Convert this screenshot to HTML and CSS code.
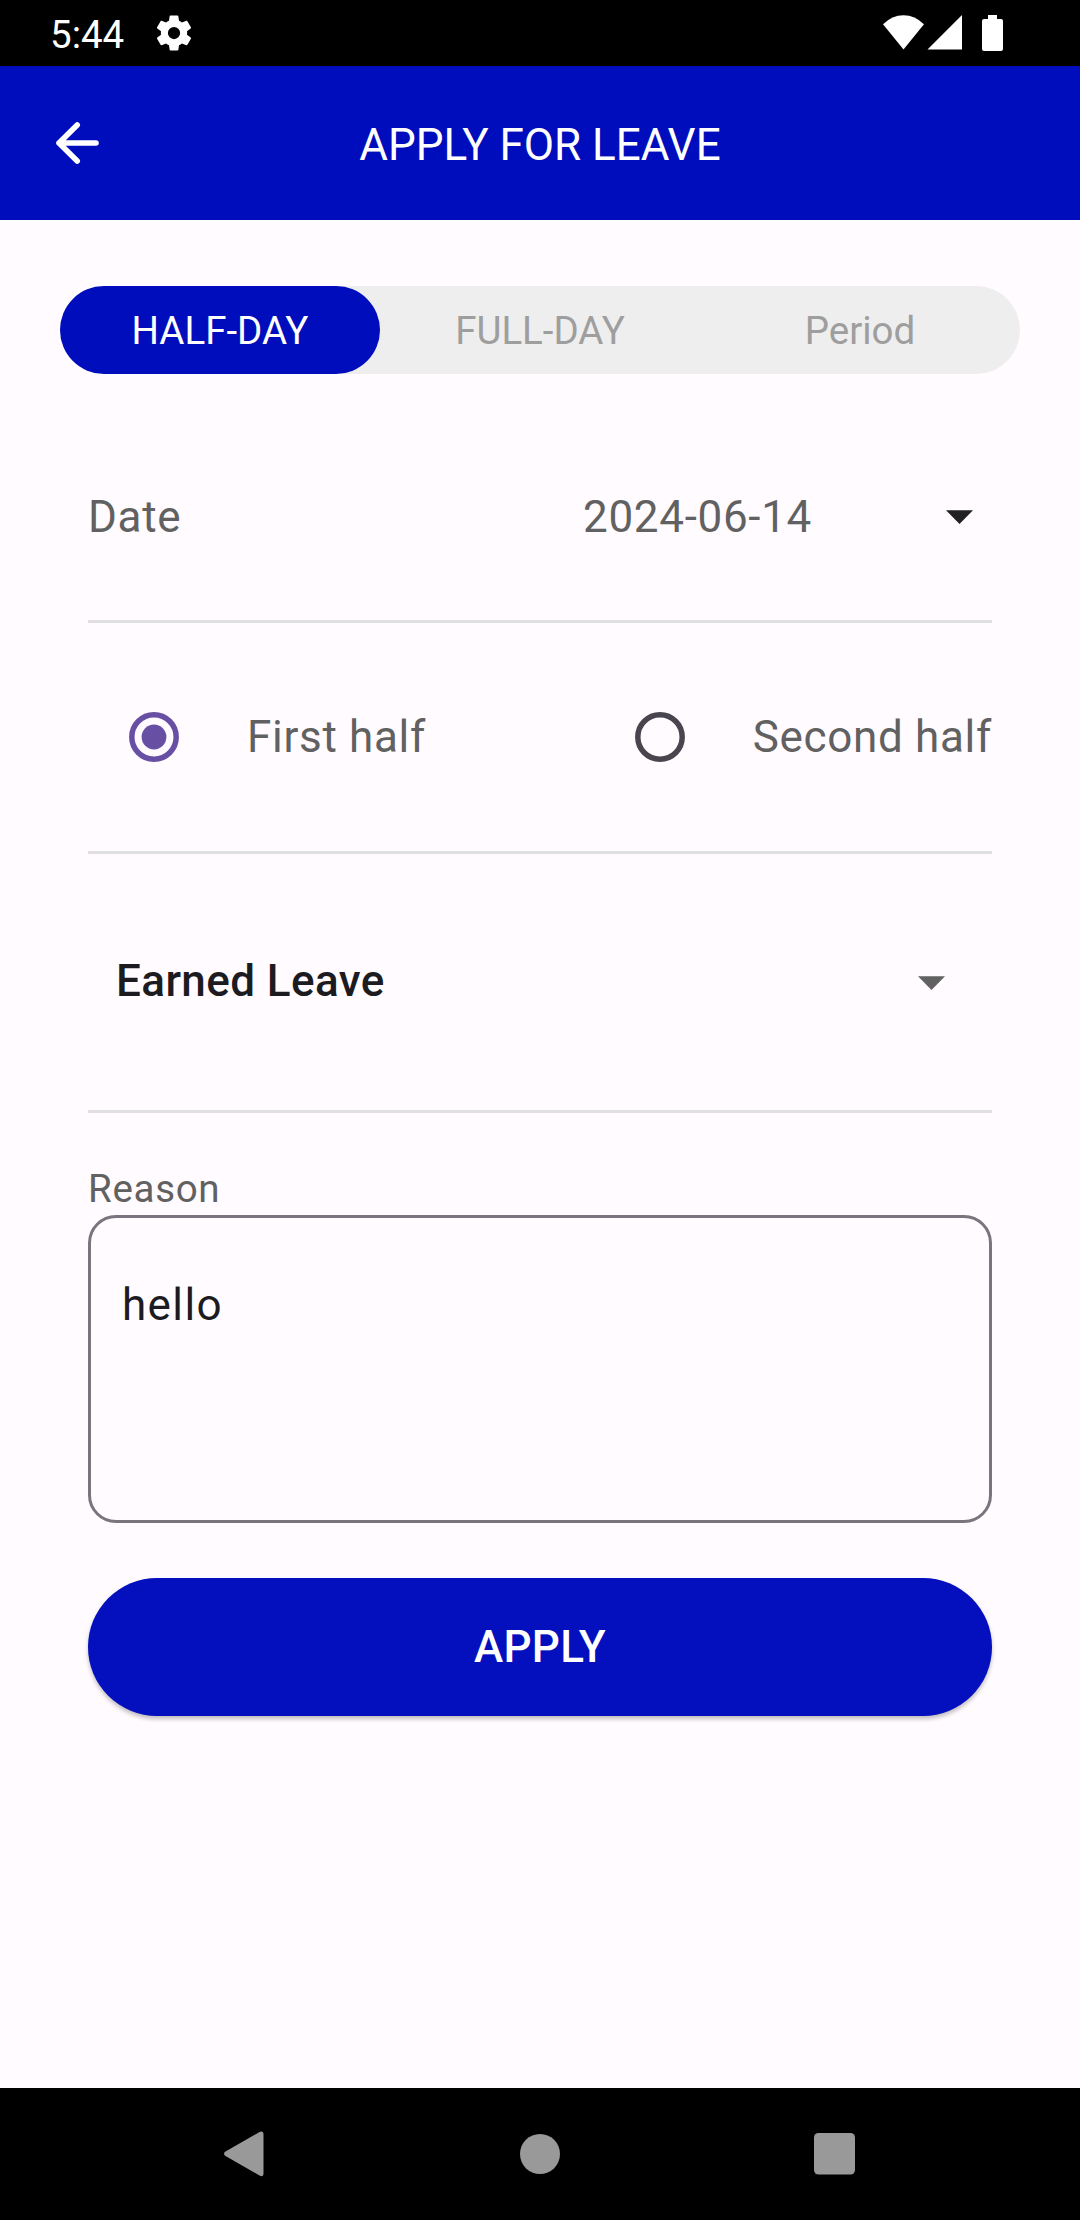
FILE: index.html
```html
<!DOCTYPE html>
<html lang="en">
<head>
<meta charset="utf-8">
<title>Apply for leave</title>
<link rel="stylesheet" href="styles.css">
</head>
<body>
<div class="screen">
  <div class="status">
    <span class="clock">5:44</span>
    <svg class="gear" width="42" height="42" viewBox="0 0 24 24"><path fill="#fff" d="M19.43 12.98c.04-.32.07-.64.07-.98s-.03-.66-.07-.98l2.11-1.65c.19-.15.24-.42.12-.64l-2-3.46c-.12-.22-.39-.3-.61-.22l-2.49 1c-.52-.4-1.08-.73-1.69-.98l-.38-2.65C14.46 2.18 14.25 2 14 2h-4c-.25 0-.46.18-.49.42l-.38 2.65c-.61.25-1.17.59-1.69.98l-2.49-1c-.23-.09-.49 0-.61.22l-2 3.46c-.13.22-.07.49.12.64l2.11 1.65c-.04.32-.07.65-.07.98s.03.66.07.98l-2.11 1.65c-.19.15-.24.42-.12.64l2 3.46c.12.22.39.3.61.22l2.49-1c.52.4 1.08.73 1.69.98l.38 2.65c.03.24.24.42.49.42h4c.25 0 .46-.18.49-.42l.38-2.65c.61-.25 1.17-.59 1.69-.98l2.49 1c.23.09.49 0 .61-.22l2-3.46c.12-.22.07-.49-.12-.64l-2.11-1.65zM12 15.5a3.5 3.5 0 1 1 0-7 3.5 3.5 0 0 1 0 7z"/></svg>
    <svg class="signals" width="122" height="38" viewBox="882 14 122 38" fill="#fff"><path d="M883 24.3Q892 15.2 903.5 15.2T924 24.3L903.500 49.500Z"/><path d="M927.500 49.500L962 15V49.500Z"/><path d="M988 15h9v4h4q2 0 2 2v28q0 2-2 2h-17q-2 0-2-2V21q0-2 2-2h4z"/></svg>
  </div>
  <header class="appbar">
    <svg class="back" width="44" height="44" viewBox="56 121 44 44" fill="none" stroke="#fff" stroke-width="5.600" stroke-linecap="round" stroke-linejoin="round"><path d="M96 143H59M77.200 125L59 143l18.200 18"/></svg>
    <h1 class="title">APPLY FOR LEAVE</h1>
  </header>
  <main class="content">
    <nav class="tabs">
      <div class="tab active">HALF-DAY</div>
      <div class="tab">FULL-DAY</div>
      <div class="tab">Period</div>
    </nav>
    <form class="form">
      <div class="row date">
        <span>Date</span>
        <span class="value">2024-06-14</span>
        <svg class="caret" width="27" height="14" viewBox="0 0 27 14"><path fill="#212121" d="M0 .3h27L13.500 14z"/></svg>
      </div>
      <div class="row halves">
        <svg class="radio" width="50" height="50" viewBox="0 0 50 50"><circle cx="25" cy="25" r="22.200" fill="none" stroke="#6750a4" stroke-width="5.500"/><circle cx="25" cy="25" r="12.400" fill="#6750a4"/></svg>
        <span>First half</span>
        <svg class="radio second" width="50" height="50" viewBox="0 0 50 50"><circle cx="25" cy="25" r="22.200" fill="none" stroke="#49454f" stroke-width="5.500"/></svg>
        <span>Second half</span>
      </div>
      <div class="row leave">
        <span class="kind">Earned Leave</span>
        <svg class="caret" width="27" height="14" viewBox="0 0 27 14"><path fill="#616161" d="M0 .3h27L13.500 14z"/></svg>
      </div>
      <div class="label">Reason</div>
      <div class="reason">hello</div>
      <div class="apply">APPLY</div>
    </form>
  </main>
  <footer class="navbar">
    <svg width="42" height="46" viewBox="0 0 42 46"><path fill="#999" d="M1.500 20.500L35.500 1Q39.500-.5 39.500 3.500V42.500Q39.500 46.500 35.500 44.500L1.500 25Q-1.500 22.700 1.500 20.500Z"/></svg>
    <svg width="40" height="40" viewBox="0 0 40 40"><circle cx="20" cy="20" r="20" fill="#999"/></svg>
    <svg width="41" height="42" viewBox="0 0 41 42"><rect width="41" height="41.500" rx="4.500" fill="#999"/></svg>
  </footer>
</div>
</body>
</html>
```
FILE: styles.css
```css
* { box-sizing: border-box; }
body { margin: 0; background: #fffbff; }
svg { display: block; flex: none; }
.screen {
  width: 1080px;
  height: 2220px;
  display: flex;
  flex-direction: column;
  font-family: Roboto, "Liberation Sans", sans-serif;
  font-size: 44px;
  line-height: 52px;
  letter-spacing: .6875px;
  color: #616161;
  white-space: nowrap;
}
.status {
  height: 66px;
  background: #000;
  color: #fff;
  display: flex;
  align-items: center;
  padding: 0 76px 0 50px;
}
.clock { width: 103px; padding-top: 4px; font-size: 38.5px; letter-spacing: 0; }
.signals { margin-left: auto; }
.appbar {
  height: 154px;
  background: #000dbd;
  color: #fff;
  display: grid;
  grid-template-columns: 44px 1fr 44px;
  align-items: center;
  padding: 0 56px;
}
.title { margin: 0; padding-top: 4px; font-size: 44px; font-weight: 400; letter-spacing: 0; text-align: center; }
.content { flex: 1; padding: 66px 60px 0; }
.tabs {
  height: 88px;
  display: grid;
  grid-template-columns: repeat(3, 1fr);
  border-radius: 44px;
  background: #eee;
  color: #9e9e9e;
  font-size: 38.5px;
  letter-spacing: 0;
}
.tab { height: 88px; padding-top: 1px; border-radius: 44px; line-height: 87px; text-align: center; }
.active { background: #000dbd; color: #fff; }
.form { padding: 0 28px; }
.row { display: flex; align-items: center; border-bottom: 3px solid #e0e0e0; }
.date { height: 249px; padding: 39px 19px 0 0; }
.value { margin-left: auto; margin-right: 134px; }
.halves { height: 231px; padding-left: 41px; }
.halves span { margin-left: 68px; }
.second { margin-left: auto; }
.leave { height: 259px; padding: 0 47px 0 28px; }
.kind { color: #1c1b1f; font-weight: 500; letter-spacing: .4125px; margin-top: -2px; }
.leave .caret { margin-left: auto; margin-top: 2px; }
.label { padding-top: 53px; height: 102px; font-size: 38.5px; line-height: 46px; }
.reason {
  height: 308px;
  padding: 61px 31px;
  border: 3px solid #79747e;
  border-radius: 28px;
  color: #1c1b1f;
  letter-spacing: 1.375px;
}
.apply {
  height: 138px;
  margin-top: 55px;
  border-radius: 69px;
  background: #040fbd;
  color: #fff;
  font-weight: 500;
  letter-spacing: .275px;
  line-height: 138px;
  text-align: center;
  box-shadow: 0 3px 4px rgba(0, 0, 0, .25);
}
.navbar {
  height: 132px;
  background: #000;
  display: flex;
  align-items: center;
  justify-content: space-between;
  padding: 0 225px 0 224px;
}
```
